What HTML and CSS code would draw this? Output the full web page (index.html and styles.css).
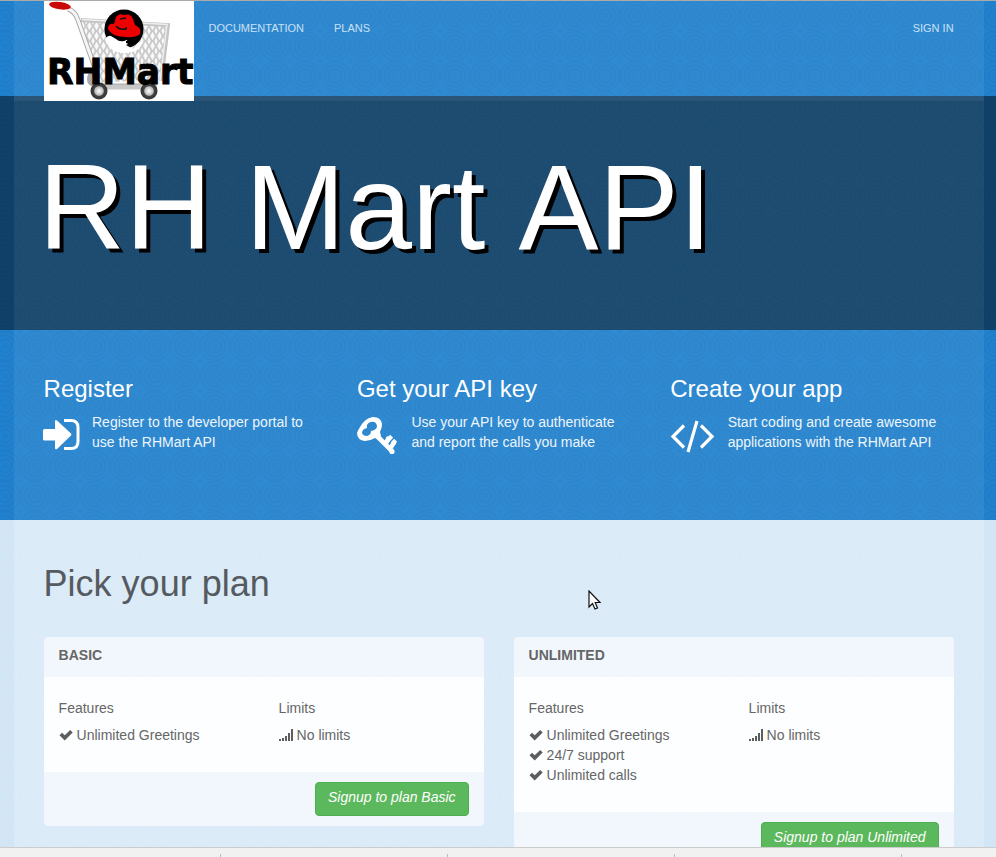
FILE: index.html
```html
<!DOCTYPE html>
<html lang="en">
<head>
<meta charset="utf-8">
<title>RH Mart API</title>
<link rel="stylesheet" href="styles.css">
</head>
<body>
<div class="shell">
  <header class="band band-nav">
    <div class="inner nav">
      <a class="brand">
        <svg width="150" height="100" viewBox="0 0 150 100" role="img" aria-label="RHMart">
          <defs>
            <pattern id="mesh" width="7" height="10" patternUnits="userSpaceOnUse">
              <rect width="7" height="10" fill="#c9c9c9"/>
              <path d="M3.5 .8 5.8 5 3.5 9.2 1.2 5zM0 -3.5 1.6 0 0 3.8zM7 -3.5 5.4 0 7 3.8zM0 6.2 1.6 10H0zM7 6.2 5.4 10H7z" fill="#f9f9f9"/>
            </pattern>
            <radialGradient id="hub"><stop offset="0" stop-color="#fff"/><stop offset=".5" stop-color="#bbb"/><stop offset=".62" stop-color="#444"/><stop offset="1" stop-color="#333"/></radialGradient>
          </defs>
          <rect width="150" height="100" fill="#fff"/>
          <path d="M38 19 124 24 117 78 54 82z" fill="url(#mesh)"/>
          <path d="M37 19 124 24 117 80" fill="none" stroke="#c4c4c4" stroke-width="4"/>
          <path d="M38 18.500 123 23.500 116 80" fill="none" stroke="#eee" stroke-width="1.500"/>
          <path d="M24 8Q31 10 34 19L52 70Q44 73 46 81Q48 85 58 85H112" fill="none" stroke="#aaa" stroke-width="5"/>
          <path d="M24 8Q31 10 34 19L52 70" fill="none" stroke="#f6f6f6" stroke-width="3"/>
          <path d="M56 86H113" stroke="#c8c8c8" stroke-width="5"/>
          <ellipse cx="16" cy="4.700" rx="11" ry="3.700" fill="#c90808" transform="rotate(8 16 4.700)"/>
          <circle cx="80" cy="28" r="19.500" fill="#000"/>
          <path d="M61 38Q64 34 67 35L72 38Q75 41 80 40L83 39 84 43 82 44 89 48 93 43 99 39Q97 52 80 52Q66 52 61 38z" fill="#fff"/>
          <path d="M82 40 86 40 85 43 82 42z" fill="#000"/>
          <path d="M64 28Q64 22 70 23L72 16Q75 12 80 14Q87 12 89 18L91 24Q98 27 96 33Q91 37 81 36Q67 35 64 28z" fill="#e00"/>
          <path d="M72 25Q75 29 82 28L82 26M76 18 82 17" stroke="#111" stroke-width="1.600" fill="none"/>
          <circle cx="55" cy="90" r="8.500" fill="url(#hub)"/>
          <circle cx="105" cy="90" r="8.500" fill="url(#hub)"/>
          <text class="brand-text" x="3" y="83" textLength="146.500" lengthAdjust="spacingAndGlyphs">RHMart</text>
        </svg>
      </a>
      <nav class="links"><a>DOCUMENTATION</a><a>PLANS</a></nav>
      <a class="signin">SIGN IN</a>
    </div>
  </header>
  <section class="band band-hero">
    <div class="inner hero"><h1>RH Mart API</h1></div>
  </section>
  <section class="band band-steps">
    <div class="inner steps">
      <div class="step">
        <h3>Register</h3>
        <div class="step-row">
          <svg class="i-reg" width="37" height="34" viewBox="0 0 37 34"><path d="M0 12.500Q0 11 1.500 11H12V3.500Q12 1 14 2.500L28 15.500Q29 16.500 28 17.500L14 31Q12 32 12 30V22.500H1.500Q0 22.500 0 21z" fill="#fff"/><path d="M21 2.500H28Q35 2.500 35 9.500V23.500Q35 30.500 28 30.500H21" fill="none" stroke="#fff" stroke-width="3"/></svg>
          <p>Register to the developer portal to<br>use the RHMart API</p>
        </div>
      </div>
      <div class="step">
        <h3>Get your API key</h3>
        <div class="step-row">
          <svg class="i-key" width="41" height="39" viewBox="0 0 41 39"><path d="M20 20 35 35M29 27 33 21.500 M29 27 32 21M34 31 37.500 26M31.500 20.500 34.500 23.500M35.500 24.500 38.500 27.500" fill="none" stroke="#fff" stroke-width="4.600"/><path fill-rule="evenodd" fill="#fff" d="M3 11Q8 2 16 1Q24 1 25 8Q25 12 23 16L24 20 20 23 18 22Q13 25 8 25Q0 24 0 17Q1 14 3 11zM14 6Q9 7 10 12Q5 13 5 17Q6 20 10 20Q14 19 14 15Q20 14 20 10Q19 5 14 6z"/><circle cx="35" cy="35.500" r="2.600" fill="#fff"/></svg>
          <p>Use your API key to authenticate<br>and report the calls you make</p>
        </div>
      </div>
      <div class="step">
        <h3>Create your app</h3>
        <div class="step-row">
          <svg class="i-code" width="45" height="34" viewBox="0 0 45 34"><path d="M14 6.500 3 17.500 14 28.500M31 6.500 42 17.500 31 28.500M27 2 18 33" fill="none" stroke="#fff" stroke-width="3.200"/></svg>
          <p>Start coding and create awesome<br>applications with the RHMart API</p>
        </div>
      </div>
    </div>
  </section>
  <main class="band band-plans">
    <div class="inner plans">
      <h2>Pick your plan</h2>
      <div class="cards">
        <article class="card">
          <h4>BASIC</h4>
          <div class="card-body">
            <div><h5>Features</h5>
              <ul><li><svg class="ic" viewBox="0 0 14 14"><path d="M.5 7.200 3 4.700 5.700 7.300 11.200 2 13.700 4.500 5.700 12.400z"/></svg>Unlimited Greetings</li></ul></div>
            <div><h5>Limits</h5>
              <ul><li><svg class="ic" viewBox="0 0 14 14"><path d="M0 11h2v2H0zM3 10h2v3H3zM6 8h2v5H6zM9 5h2v8H9zM12 1h2v12h-2z"/></svg>No limits</li></ul></div>
          </div>
          <footer><a class="btn">Signup to plan Basic</a></footer>
        </article>
        <article class="card">
          <h4>UNLIMITED</h4>
          <div class="card-body">
            <div><h5>Features</h5>
              <ul>
                <li><svg class="ic" viewBox="0 0 14 14"><path d="M.5 7.200 3 4.700 5.700 7.300 11.200 2 13.700 4.500 5.700 12.400z"/></svg>Unlimited Greetings</li>
                <li><svg class="ic" viewBox="0 0 14 14"><path d="M.5 7.200 3 4.700 5.700 7.300 11.200 2 13.700 4.500 5.700 12.400z"/></svg>24/7 support</li>
                <li><svg class="ic" viewBox="0 0 14 14"><path d="M.5 7.200 3 4.700 5.700 7.300 11.200 2 13.700 4.500 5.700 12.400z"/></svg>Unlimited calls</li>
              </ul></div>
            <div><h5>Limits</h5>
              <ul><li><svg class="ic" viewBox="0 0 14 14"><path d="M0 11h2v2H0zM3 10h2v3H3zM6 8h2v5H6zM9 5h2v8H9zM12 1h2v12h-2z"/></svg>No limits</li></ul></div>
          </div>
          <footer><a class="btn">Signup to plan Unlimited</a></footer>
        </article>
      </div>
    </div>
  </main>
</div>
<div class="taskbar"><i></i><i></i><i></i><i></i></div>
<svg class="cursor" width="14" height="21" viewBox="0 0 14 21"><path d="M1 1V17L4.500 13.500 7 19 9.500 18 7.200 12.500H12z" fill="#fff" stroke="#111" stroke-width="1.200"/></svg>
</body>
</html>
```
FILE: styles.css
```css
* { box-sizing: border-box; }
html, body { margin: 0; height: 857px; overflow: hidden; }
body {
  position: relative;
  display: flex;
  flex-direction: column;
  font: 14px/20px "Liberation Sans", Arial, sans-serif;
  color: #666;
}
h1, h2, h3, h4, h5, p, ul { margin: 0; padding: 0; font-weight: 400; }
.shell {
  height: 847px;
  overflow: hidden;
  border-top: 1px solid #aaa;
  background-color: #2182ce;
  background-image: radial-gradient(circle at 50% 50%,
    rgba(0,50,130,.04) 0 3px, transparent 4px 5px,
    rgba(0,50,130,.07) 6px 7px, transparent 8px 9px,
    rgba(0,50,130,.07) 10px 11px, transparent 12px 13px,
    rgba(0,50,130,.06) 14px 15px, transparent 16px 19px, rgba(0,50,130,.06) 20px);
  background-size: 30px 30px;
  background-position: -10px 0;
}
.band { display: flow-root; }
.inner {
  width: 970px;
  margin-left: 13.600px;
  padding: 0 30px;
  background: rgba(255,255,255,.07);
}
.nav { height: 95px; display: flex; position: relative; }
.brand { width: 150px; height: 100px; position: relative; z-index: 2; }
.brand svg { display: block; }
.brand-text { font: bold 36px "DejaVu Sans", sans-serif; fill: #000; stroke: #000; stroke-width: 1px; }
.links { display: flex; gap: 30px; margin-left: 14.900px; }
.links a, .signin { font-size: 11px; line-height: 20px; padding-top: 17px; color: #c9e0f4; }
.signin { margin-left: auto; }
.band-hero { background: rgba(0,0,0,.49); }
.hero { height: 234px; padding-top: 45px; background: linear-gradient(rgba(255,255,255,.11) 5px, rgba(255,255,255,.06) 5px); }
.hero h1 { font-size: 120px; line-height: 132px; margin-left: -5px; color: #fff; text-shadow: 4px 4px #000; white-space: nowrap; font-kerning: none; }
.steps {
  height: 190px;
  padding-top: 45px;
  display: grid;
  grid-template-columns: repeat(3, 1fr);
  column-gap: 30px;
  color: #fff;
}
.step h3 { font-size: 24px; line-height: 27px; }
.step-row { display: flex; padding-top: 10px; }
.step-row p { color: #edf5fc; white-space: nowrap; }
.i-reg { margin: 6px 12.100px 0 -.7px; }
.i-key { margin: 4px 13.800px 0 -.3px; }
.i-code { margin: 7px 12.400px 0 0; }
.band-plans { background: rgba(255,255,255,.805); }
.plans { height: 440px; padding-top: 44px; background: rgba(255,255,255,.2); }
.plans h2 { font-size: 36px; line-height: 40px; color: #555a60; }
.cards { display: grid; grid-template-columns: 1fr 1fr; gap: 30px; margin-top: 33px; align-items: start; }
.card { background: rgba(255,255,255,.6); border-radius: 4px; overflow: hidden; }
.card h4 { height: 40px; padding: 8px 15px; font-size: 14px; font-weight: 700; }
.card-body { display: grid; grid-template-columns: 1fr 1fr; padding: 21px 15px 27px; background: rgba(255,255,255,.8); }
.card-body > div + div { padding-left: 15px; }
.card h5 { font-size: 14px; line-height: 20px; margin-bottom: 7px; }
.card ul { list-style: none; }
.card li { display: flex; align-items: center; gap: 4px; }
.ic { width: 14px; height: 14px; fill: #5d5d5d; }
.card footer { height: 54px; display: flex; justify-content: flex-end; padding: 10px 15px; }
.btn { height: 34px; padding: 4px 12px; border: 1px solid #4cae4c; border-radius: 4px; background: #5cb85c; color: #fff; font-style: italic; line-height: 20px; }
.taskbar { height: 10px; padding: 6px 0 0 220px; display: flex; gap: 226px; background: #f1f1f1; border-top: 1px solid #ccc; }
.taskbar i { width: 1px; flex: none; background: #bbb; }
.cursor { position: absolute; left: 587.500px; top: 590px; }
```
